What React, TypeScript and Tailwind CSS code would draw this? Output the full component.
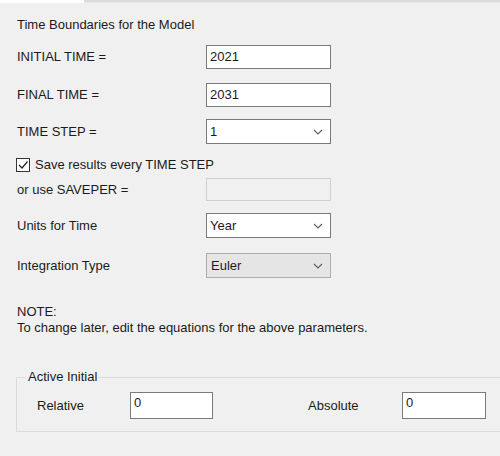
import React from "react";

function Chevron() {
  return (
    <svg width="10" height="6" viewBox="0 0 10 6" className="shrink-0">
      <path d="M1 1 L5 5 L9 1" fill="none" stroke="#5f5f5f" strokeWidth="1.1" />
    </svg>
  );
}

function TextBox({ value, disabled }: { value?: string; disabled?: boolean }) {
  return (
    <div
      className={
        disabled
          ? "w-[125px] h-full border border-[#cfcfcf] bg-[#f0f0f0]"
          : "w-[125px] h-full border border-[#7a7a7a] bg-white pl-[3px] flex items-center"
      }
    >
      {value}
    </div>
  );
}

function Select({ value, gray }: { value: string; gray?: boolean }) {
  return (
    <div
      className={
        gray
          ? "w-[125px] h-full border border-[#adadad] bg-[#e5e5e5] pl-[4px] pr-[7px] flex items-center justify-between"
          : "w-[125px] h-full border border-[#7a7a7a] bg-white pl-[3px] pr-[7px] flex items-center justify-between"
      }
    >
      <span>{value}</span>
      <Chevron />
    </div>
  );
}

function Row({
  label,
  className,
  children,
}: {
  label: string;
  className: string;
  children: React.ReactNode;
}) {
  return (
    <div className={"flex items-center pl-[17px] " + className}>
      <div className="w-[189px]">{label}</div>
      {children}
    </div>
  );
}

export default function App() {
  return (
    <div
      className="w-[500px] h-[456px] overflow-hidden bg-[#f0f0f0] text-[#1b1b1b] text-[13px] leading-[16px]"
      style={{ fontFamily: '"Liberation Sans", Arial, sans-serif' }}
    >
      <div className="flex h-[3px]">
        <div className="w-[84px] bg-white" />
        <div className="flex-1 border-t-2 border-[#dadada] bg-[#e9e9e9]" />
      </div>

      <div className="mt-[14px] pl-[17px] h-[16px]">Time Boundaries for the Model</div>

      <Row label="INITIAL TIME =" className="mt-[12px] h-[24px]">
        <TextBox value="2021" />
      </Row>
      <Row label="FINAL TIME =" className="mt-[14px] h-[24px]">
        <TextBox value="2031" />
      </Row>
      <Row label="TIME STEP =" className="mt-[12px] h-[25px]">
        <Select value="1" />
      </Row>

      <div className="mt-[12px] h-[18px] pl-[16px] flex items-center gap-[5px]">
        <div className="w-[14px] h-[14px] border border-[#333] bg-white flex items-center justify-center">
          <svg width="12" height="12" viewBox="0 0 12 12">
            <path d="M2 6 L5 9 L10.5 2.5" fill="none" stroke="#222" strokeWidth="1.2" />
          </svg>
        </div>
        <span>Save results every TIME STEP</span>
      </div>

      <Row label="or use SAVEPER =" className="mt-[4px] h-[23px]">
        <TextBox disabled />
      </Row>
      <Row label="Units for Time" className="mt-[12px] h-[25px]">
        <Select value="Year" />
      </Row>
      <Row label="Integration Type" className="mt-[15px] h-[25px]">
        <Select value="Euler" gray />
      </Row>

      <div className="mt-[26px] pl-[17px]">
        <div>NOTE:</div>
        <div>To change later, edit the equations for the above parameters.</div>
      </div>

      <div className="relative mt-[41px] ml-[16px] w-[500px] h-[55px] border border-[#dcdcdc] pt-[14px]">
        <span className="absolute left-[9px] top-[-9px] bg-[#f0f0f0] px-[2px]">Active Initial</span>
        <div className="flex items-center h-[27px] pl-[20px]">
          <div className="w-[93px]">Relative</div>
          <div className="w-[83px] h-full border border-[#7a7a7a] bg-white pl-[3px] pt-[2px]">0</div>
          <div className="w-[95px]" />
          <div className="w-[94px]">Absolute</div>
          <div className="w-[84px] h-full border border-[#7a7a7a] bg-white pl-[3px] pt-[2px]">0</div>
        </div>
      </div>
    </div>
  );
}
